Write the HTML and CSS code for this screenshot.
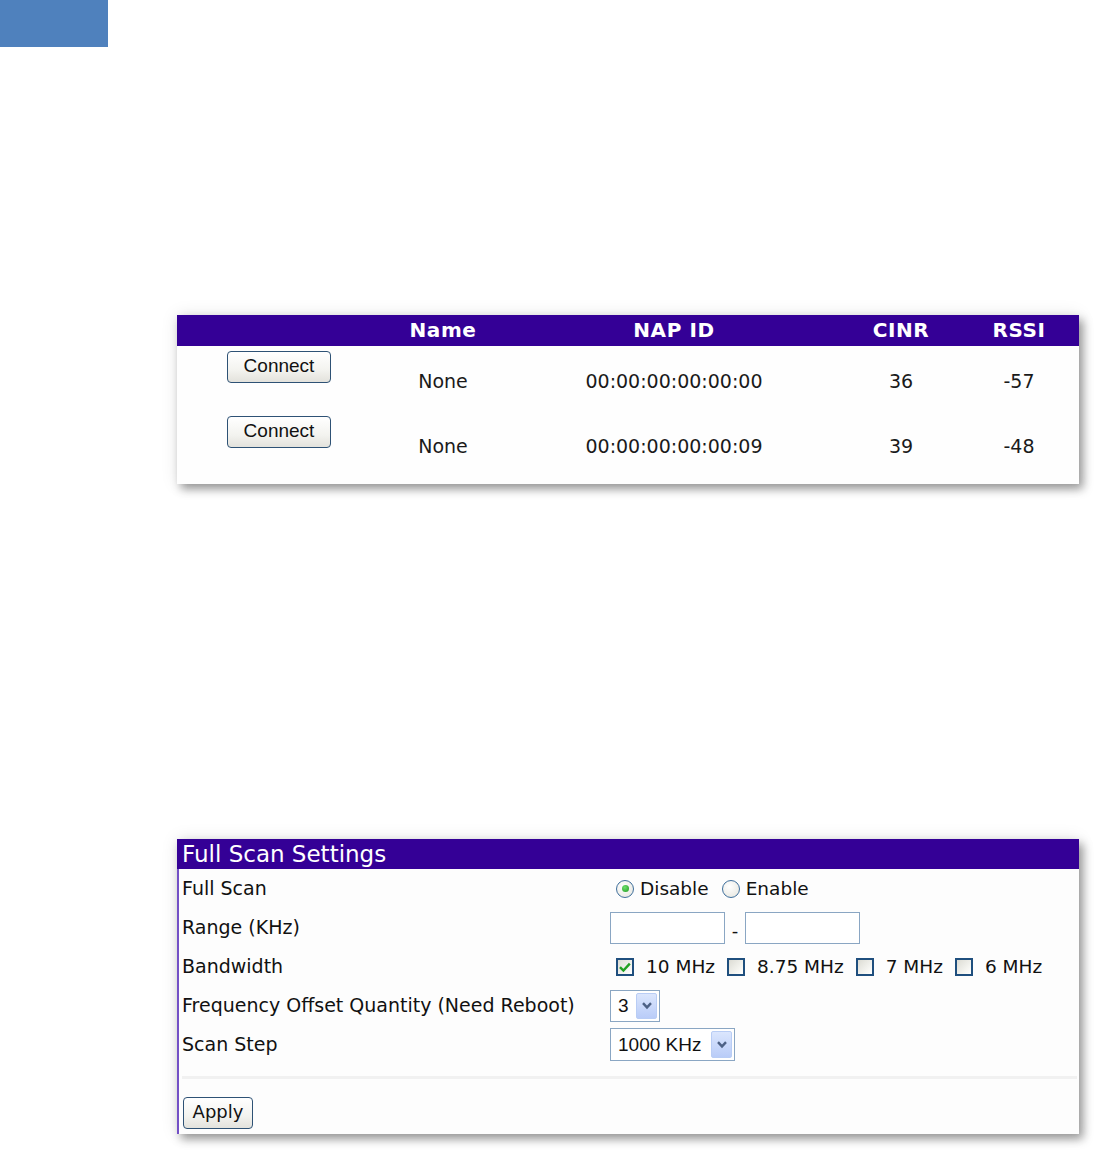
FILE: index.html
```html
<!DOCTYPE html>
<html>
<head>
<meta charset="utf-8">
<link rel="stylesheet" href="styles.css">
</head>
<body>
<div class="topbar"></div>

<div class="panel list-panel">
  <table class="aplist">
    <colgroup>
      <col class="c1"><col class="c2"><col class="c3"><col class="c4"><col class="c5">
    </colgroup>
    <thead>
      <tr><th></th><th>Name</th><th>NAP ID</th><th>CINR</th><th>RSSI</th></tr>
    </thead>
    <tbody>
      <tr>
        <td class="btncell"><button class="btn connect">Connect</button></td>
        <td>None</td><td>00:00:00:00:00:00</td><td>36</td><td>-57</td>
      </tr>
      <tr>
        <td class="btncell"><button class="btn connect">Connect</button></td>
        <td>None</td><td>00:00:00:00:00:09</td><td>39</td><td>-48</td>
      </tr>
    </tbody>
  </table>
</div>

<div class="panel settings-panel">
  <div class="settings-title">Full Scan Settings</div>
  <div class="settings-body">
    <div class="grid">
      <div class="lbl">Full Scan</div>
      <div class="val">
        <span class="radio on"><span class="dot"></span></span><span class="opt-text">Disable</span>
        <span class="radio"></span><span class="opt-text">Enable</span>
      </div>

      <div class="lbl">Range (KHz)</div>
      <div class="val">
        <input class="txt" type="text"><span class="dash">-</span><input class="txt" type="text">
      </div>

      <div class="lbl">Bandwidth</div>
      <div class="val bw">
        <span class="chk"><svg viewBox="0 0 18 18" width="18" height="18"><path d="M4 9.2 L7.4 12.6 L13.8 5.6" fill="none" stroke="#21a121" stroke-width="2.4"/></svg></span><span class="bw-text">10 MHz</span>
        <span class="chk"></span><span class="bw-text">8.75 MHz</span>
        <span class="chk"></span><span class="bw-text">7 MHz</span>
        <span class="chk"></span><span class="bw-text">6 MHz</span>
      </div>

      <div class="lbl">Frequency Offset Quantity (Need Reboot)</div>
      <div class="val">
        <div class="sel sel-small"><span class="sel-text">3</span><span class="sel-arrow"><svg viewBox="0 0 12 9" width="12" height="9"><path d="M2 2.2 L6 6.4 L10 2.2" fill="none" stroke="#4d6185" stroke-width="2.4"/></svg></span></div>
      </div>

      <div class="lbl">Scan Step</div>
      <div class="val">
        <div class="sel sel-wide"><span class="sel-text">1000 KHz</span><span class="sel-arrow"><svg viewBox="0 0 12 9" width="12" height="9"><path d="M2 2.2 L6 6.4 L10 2.2" fill="none" stroke="#4d6185" stroke-width="2.4"/></svg></span></div>
      </div>
    </div>
    <div class="sep"></div>
    <div class="actions"><button class="btn apply">Apply</button></div>
  </div>
</div>
</body>
</html>
```
FILE: styles.css
```css
html, body {
  margin: 0;
  padding: 0;
  background: #ffffff;
}
body {
  font-family: "DejaVu Sans", Verdana, sans-serif;
  color: #111;
  padding-bottom: 22px;
}
.topbar {
  width: 108px;
  height: 47px;
  background: #4f81bd;
}
.panel {
  margin-left: 177px;
  width: 902px;
  background: #fefefe;
  box-shadow: 4px 5px 9px rgba(0,0,0,0.38), 0 0 16px rgba(0,0,0,0.10);
}
.list-panel {
  margin-top: 268px;
  padding-bottom: 8px;
}
.aplist {
  width: 902px;
  border-collapse: collapse;
  table-layout: fixed;
}
.aplist col.c1 { width: 204px; }
.aplist col.c2 { width: 124px; }
.aplist col.c3 { width: 338px; }
.aplist col.c4 { width: 116px; }
.aplist col.c5 { width: 120px; }
.aplist th {
  background: #340096;
  color: #fff;
  font-weight: bold;
  font-size: 20px;
  letter-spacing: 0.6px;
  height: 31px;
  padding: 0;
  line-height: 31px;
  text-align: center;
}
.aplist td {
  height: 65px;
  padding: 24px 0 0;
  box-sizing: border-box;
  vertical-align: top;
  text-align: center;
  font-size: 19px;
  line-height: 22px;
  color: #1a1a1a;
}
.aplist td.btncell {
  padding-top: 5px;
}
.btn {
  font-family: "Liberation Sans", Arial, sans-serif;
  color: #111;
  border: 1.5px solid #2e5275;
  border-radius: 4px;
  background: linear-gradient(#ffffff, #f3f3ef 60%, #e3e2dc);
  padding: 0;
  margin: 0;
  box-sizing: border-box;
}
.connect {
  width: 104px;
  height: 32px;
  font-size: 19px;
  line-height: 26px;
  padding-bottom: 2px;
}
.settings-panel {
  margin-top: 355px;
}
.settings-title {
  background: #340096;
  color: #fff;
  height: 30px;
  line-height: 31px;
  font-size: 23px;
  padding-left: 5px;
}
.settings-body {
  border-left: 2px solid #7350c6;
  padding: 0 0 5px 3px;
  background: #fdfdfd;
}
.grid {
  display: grid;
  grid-template-columns: 428px 1fr;
  grid-auto-rows: 39px;
}
.lbl {
  display: flex;
  align-items: center;
  font-size: 19px;
  color: #111;
  padding-bottom: 2px;
}
.val {
  display: flex;
  align-items: center;
  font-size: 18.5px;
  color: #111;
}
.radio {
  width: 18px;
  height: 18px;
  box-sizing: border-box;
  border: 1.5px solid #3f6f9c;
  border-radius: 50%;
  background: radial-gradient(circle at 40% 35%, #ffffff, #e4e4dc);
  display: inline-flex;
  align-items: center;
  justify-content: center;
  margin-left: 6px;
}
.radio + .opt-text {
  margin-left: 6px;
}
.opt-text + .radio {
  margin-left: 13px;
}
.dot {
  width: 7px;
  height: 7px;
  border-radius: 50%;
  background: radial-gradient(circle at 40% 35%, #6ee06e, #1f9a1f);
}
.txt {
  width: 115px;
  height: 32px;
  box-sizing: border-box;
  border: 1px solid #8aa6c3;
  margin: 0;
  padding: 0 4px;
  background: #fff;
  font-size: 17px;
}
.dash {
  width: 20px;
  text-align: center;
  font-size: 18px;
  padding-top: 6px;
}
.chk {
  width: 18px;
  height: 18px;
  box-sizing: border-box;
  border: 2px solid #1f4f7e;
  background: linear-gradient(135deg, #dcdcd4, #f6f6f2 70%, #ffffff);
  display: inline-block;
  margin-left: 12px;
  position: relative;
}
.chk:first-child {
  margin-left: 6px;
}
.chk svg {
  position: absolute;
  left: -2px;
  top: -2px;
}
.bw-text {
  margin-left: 12px;
}
.sel {
  height: 33px;
  box-sizing: border-box;
  border: 1px solid #8aa6c3;
  background: #fff;
  display: flex;
  align-items: center;
  padding: 2px;
  font-family: "Liberation Sans", Arial, sans-serif;
  font-size: 19px;
  color: #111;
}
.sel-small { width: 50px; height: 32px; }
.sel-wide { width: 125px; }
.sel-text {
  flex: 1;
  padding-left: 5px;
}
.sel-arrow {
  width: 21px;
  height: 100%;
  box-sizing: border-box;
  border: 1px solid #b9cdf5;
  border-radius: 2px;
  background: linear-gradient(#dbe6fd, #b9ccf8);
  display: flex;
  align-items: center;
  justify-content: center;
}
.sep {
  height: 3px;
  background: #f1f1f1;
  margin: 12px 2px 0 0;
}
.actions {
  padding-top: 18px;
  padding-left: 1px;
}
.apply {
  width: 70px;
  height: 32px;
  font-family: "DejaVu Sans", Verdana, sans-serif;
  font-size: 18px;
  line-height: 26px;
  padding-bottom: 2px;
}
```
